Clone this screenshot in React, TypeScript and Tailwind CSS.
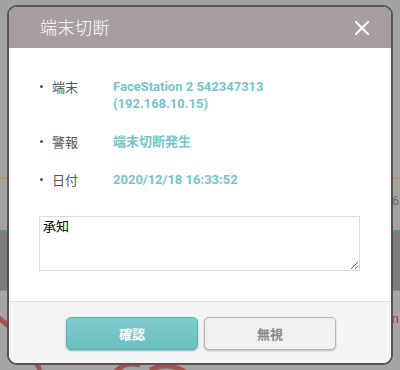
import React from "react";

export default function App() {
  const rows = [
    { label: "端末", value: ["FaceStation 2 542347313", "(192.168.10.15)"] },
    { label: "警報", value: ["端末切断発生"] },
    { label: "日付", value: ["2020/12/18 16:33:52"] },
  ];
  return (
    <div
      className="relative w-[400px] h-[370px] overflow-hidden bg-[#a2a1a1]"
      style={{ fontFamily: "Roboto, 'Noto Sans CJK JP', sans-serif" }}
    >
      {/* dimmed background page */}
      <div className="flex flex-col w-full h-full">
        <div className="h-[177px] bg-[#a3a2a2]" />
        <div className="h-[2px] bg-[#c2935e]" />
        <div className="h-[51px] bg-[#a3a2a2] flex justify-end pr-[1px]">
          <span className="text-[#6a6a6a] text-[13px] mt-[12px]">6</span>
        </div>
        <div className="h-[2px] bg-[#3c9d9d]" />
        <div className="h-[58px] bg-[#817c7a]" />
        <div className="h-[1px] bg-[#8d8a89]" />
        <div className="flex-1 bg-[#a6a5a5] flex justify-end pr-[1px]">
          <span className="text-[#b23a3a] text-[13px] mt-[18px]">n</span>
        </div>
      </div>
      <svg className="absolute left-0 top-[290px]" width="400" height="80">
        <path d="M-10 22 Q 20 40 40 80" stroke="#a25450" strokeWidth="5" fill="none" />
        <path d="M110 90 Q 120 70 140 75" stroke="#a25450" strokeWidth="5" fill="none" />
        <path d="M150 80 Q 170 70 190 85" stroke="#a25450" strokeWidth="5" fill="none" />
      </svg>

      {/* modal */}
      <div className="absolute left-[7px] top-[5px] w-[386px] h-[360px] rounded-[10px] border-2 border-[#5b5054] overflow-hidden flex flex-col bg-white">
        <div className="h-[41px] bg-[#a79ea0] flex items-center justify-between pl-[31px] pr-[22px] shrink-0">
          <span
            className="text-white text-[17px] font-light tracking-[0.5px] mt-[-2px]"
            style={{ fontFamily: "'Noto Sans CJK JP', sans-serif" }}
          >
            端末切断
          </span>
          <svg width="14" height="14" viewBox="0 0 14 14">
            <path d="M1 1 L13 13 M13 1 L1 13" stroke="white" strokeWidth="2" strokeLinecap="square" />
          </svg>
        </div>
        <div className="flex-1 flex flex-col pt-[30px] pl-[30px] pr-[30px]">
          <div className="flex flex-col gap-[21px]">
            {rows.map((r) => (
              <div key={r.label} className="flex items-start text-[13px] leading-[17px]">
                <div className="w-[74px] flex items-center h-[17px]">
                  <span className="w-[3px] h-[3px] rounded-full bg-[#555] ml-[1px] mr-[9px]" />
                  <span
                    className="text-[#555]"
                    style={{ fontFamily: "'Noto Sans CJK JP', sans-serif" }}
                  >
                    {r.label}
                  </span>
                </div>
                <div className="flex flex-col font-bold text-[#74c4c8]">
                  {r.value.map((v) => (
                    <span key={v} style={{ fontFamily: "Roboto, 'Noto Sans CJK JP', sans-serif" }}>
                      {v}
                    </span>
                  ))}
                </div>
              </div>
            ))}
          </div>
          <textarea
            defaultValue="承知"
            className="mt-[28px] w-[321px] h-[55px] border border-[#dcdcdc] text-[13px] leading-[16px] text-black px-[3px] py-[1px] resize-y outline-none"
            style={{ fontFamily: "'Noto Sans CJK JP', sans-serif" }}
          />
        </div>
        <div className="h-[62px] shrink-0 bg-[#f4f4f4] border-t border-[#dfdfdf] flex items-start pt-[15px] pl-[57px] gap-[6px]">
          <button
            className="w-[132px] h-[33px] rounded-[5px] border border-[#52b3b5] text-white text-[13px] font-bold shadow-[0_1px_2px_rgba(0,0,0,0.3)] bg-gradient-to-b from-[#7fcbce] to-[#6bbec0]"
            style={{ fontFamily: "'Noto Sans CJK JP', sans-serif" }}
          >
            確認
          </button>
          <button
            className="w-[132px] h-[33px] rounded-[5px] border border-[#b4b4b4] text-[#8a8a8a] text-[13px] font-bold bg-[#f0f0f0] shadow-[0_1px_2px_rgba(0,0,0,0.25)]"
            style={{ fontFamily: "'Noto Sans CJK JP', sans-serif" }}
          >
            無視
          </button>
        </div>
      </div>
    </div>
  );
}
